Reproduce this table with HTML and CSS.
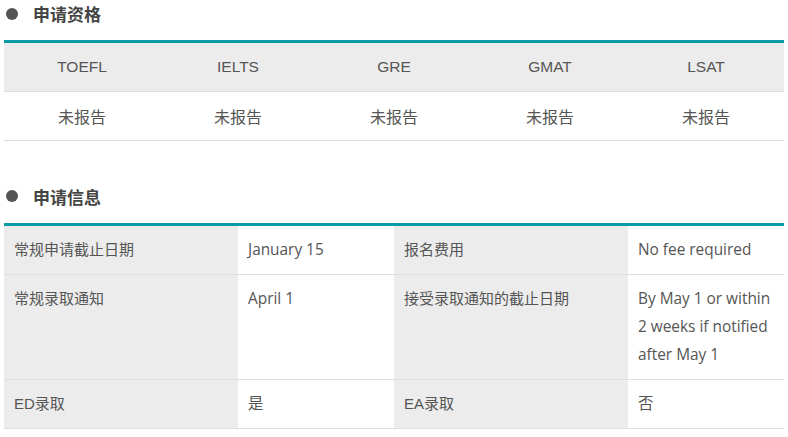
FILE: index.html
```html
<!DOCTYPE html>
<html lang="zh">
<head>
<meta charset="utf-8">
<link rel="stylesheet" href="styles.css">
</head>
<body>
<section class="section">
  <h2 class="title"><span class="dot"></span>申请资格</h2>
  <table class="scores">
    <tr class="head">
      <td>TOEFL</td><td>IELTS</td><td>GRE</td><td>GMAT</td><td>LSAT</td>
    </tr>
    <tr class="data">
      <td>未报告</td><td>未报告</td><td>未报告</td><td>未报告</td><td>未报告</td>
    </tr>
  </table>
</section>
<section class="section second">
  <h2 class="title"><span class="dot"></span>申请信息</h2>
  <table class="info">
    <colgroup>
      <col class="c-label"><col class="c-value"><col class="c-label"><col class="c-value">
    </colgroup>
    <tr>
      <td class="label">常规申请截止日期</td>
      <td class="value">January 15</td>
      <td class="label">报名费用</td>
      <td class="value">No fee required</td>
    </tr>
    <tr>
      <td class="label">常规录取通知</td>
      <td class="value">April 1</td>
      <td class="label">接受录取通知的截止日期</td>
      <td class="value">By May 1 or within 2 weeks if notified after May 1</td>
    </tr>
    <tr>
      <td class="label">ED录取</td>
      <td class="value">是</td>
      <td class="label">EA录取</td>
      <td class="value">否</td>
    </tr>
  </table>
</section>
</body>
</html>
```
FILE: styles.css
```css
html, body {
  margin: 0;
  padding: 0;
  background: #fff;
}
body {
  padding: 0 4px;
  color: #555;
  font-family: "Liberation Sans", "Noto Sans CJK SC", sans-serif;
}
.title {
  margin: 0;
  height: 40px;
  display: flex;
  align-items: center;
  padding-bottom: 13px;
  box-sizing: border-box;
  font-size: 17px;
  font-weight: bold;
  color: #444;
  font-family: "Noto Sans CJK SC", sans-serif;
}
.dot {
  width: 12px;
  height: 12px;
  border-radius: 50%;
  background: #555;
  margin-left: 2px;
  margin-right: 15px;
}
.second {
  margin-top: 41px;
}
.second .title {
  height: 41px;
  padding-bottom: 13px;
}
table {
  width: 780px;
  border-collapse: collapse;
  border-top: 3px solid #0a9ba8;
  table-layout: fixed;
}
td {
  padding: 0;
  border-bottom: 1px solid #dedede;
}
.scores td {
  text-align: center;
  height: 48px;
  font-size: 15.5px;
  color: #555;
}
.scores .head td {
  background: #ececec;
}
.scores .data td {
  font-size: 16px;
  font-family: "Noto Sans CJK SC", sans-serif;
}
.c-label {
  width: 234px;
}
.c-value {
  width: 156px;
}
.info td {
  vertical-align: top;
  padding: 10px 9px 10px 10px;
  line-height: 28px;
}
.info .label {
  background: #ececec;
  font-size: 15px;
  font-family: "Liberation Sans", "Noto Sans CJK SC", sans-serif;
}
.info .value {
  background: #fff;
  font-size: 15.4px;
  font-family: "Open Sans", "Noto Sans CJK SC", sans-serif;
}
```
